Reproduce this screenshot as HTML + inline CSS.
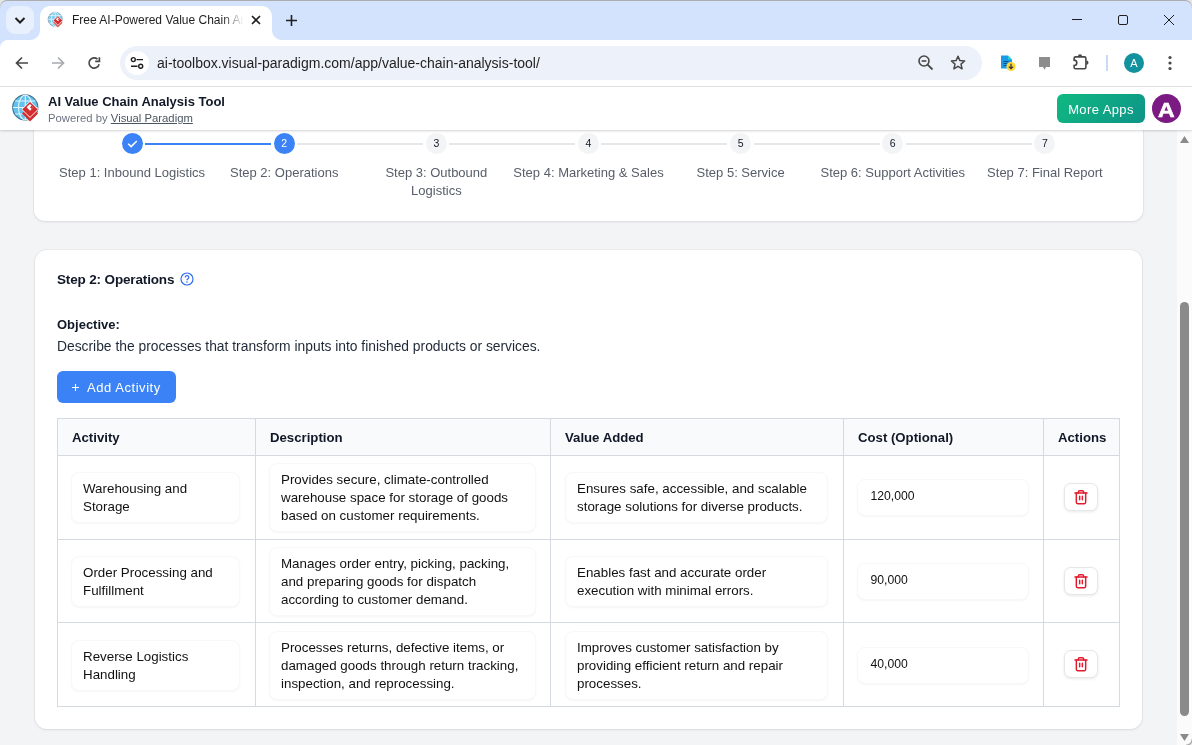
<!DOCTYPE html>
<html><head><meta charset="utf-8">
<style>
*{box-sizing:border-box;margin:0;padding:0}
html,body{width:1192px;height:745px;overflow:hidden;background:#fff}
#root{position:absolute;left:0;top:0;width:1192px;height:745px;background:#fff;will-change:transform;overflow:hidden}
body{position:relative;font-family:"Liberation Sans",sans-serif;color:#111827}
.abs{position:absolute}
.bold{font-weight:bold}
#winbg{left:0;top:0;width:1192px;height:12px;background:#e6e6e6}
#tabstrip{left:0;top:0;width:1192px;height:40px;background:#d3e3fd;border-radius:7px 7px 0 0;box-shadow:inset 0 1px 0 #adadad}
#topline{left:7px;top:0;width:1178px;height:1px;background:#adadad}
#ddbtn{left:6px;top:6px;width:28px;height:28px;border-radius:9px;background:#e9f0fd}
#tab{left:40px;top:6px;width:232px;height:35px;background:#fff;border-radius:10px 10px 0 0}
#toolbar{left:0;top:40px;width:1192px;height:46px;background:#fff}
#tbborder{left:0;top:86px;width:1192px;height:1px;background:#e2e3e6}
#omni{left:120px;top:46px;width:862px;height:34px;border-radius:17px;background:#edf1f9}
#url{left:157px;top:55px;font-size:14px;line-height:17px;color:#1f1f1f;white-space:nowrap}
#apphdr{left:0;top:87px;width:1192px;height:43px;background:#fff;box-shadow:0 1.5px 1.5px rgba(0,0,0,.08),0 1px 3px rgba(0,0,0,.08);z-index:5}
#content{left:0;top:130px;width:1177px;height:615px;background:#f3f4f6}
#scroll{left:1177px;top:130px;width:15px;height:615px;background:#fbfbfb}
.card{position:absolute;left:35px;width:1107px;background:#fff;border-radius:12px;box-shadow:0 1px 3px rgba(0,0,0,.08),0 0 0 1px rgba(0,0,0,.035)}
.stepc{position:absolute;top:133px;width:21px;height:21px;border-radius:50%;font-size:10.5px;line-height:21px;text-align:center}
.stepl{position:absolute;top:164px;width:152px;text-align:center;font-size:13px;line-height:18px;color:#575d69;white-space:nowrap}
.hl{height:1px;background:#d5d9e0}
.vl{width:1px;background:#d5d9e0}
.th{font-weight:bold;font-size:13.2px;line-height:16px;color:#111827;white-space:nowrap}
.box{position:absolute;border:1px solid #f8f8f9;border-radius:8px;background:#fff;box-shadow:0 1px 2px rgba(0,0,0,.04);padding:6.5px 11px 0;font-size:13.35px;line-height:18px;color:#111;white-space:nowrap}
.inp{padding:7px 12.5px;font-size:12.2px}
.delb{position:absolute;width:34px;height:28px;border:1px solid #e5e7eb;border-radius:7px;background:#fff;box-shadow:0 1px 3px rgba(0,0,0,.09);display:flex;align-items:center;justify-content:center}
</style></head><body>
<div id="root">
<div id="content" class="abs"></div>
<div class="card" style="top:80px;height:141px;left:34px;width:1109px;border-radius:11px"></div>
<div class="card" style="top:250px;height:479px"></div>
<div class="abs" style="left:145.07px;top:143px;width:126px;height:2px;background:#3b82f6"></div>
<div class="abs" style="left:297.21px;top:143px;width:126px;height:2px;background:#e5e7eb"></div>
<div class="abs" style="left:449.35px;top:143px;width:126px;height:2px;background:#e5e7eb"></div>
<div class="abs" style="left:601.49px;top:143px;width:126px;height:2px;background:#e5e7eb"></div>
<div class="abs" style="left:753.63px;top:143px;width:126px;height:2px;background:#e5e7eb"></div>
<div class="abs" style="left:905.77px;top:143px;width:126px;height:2px;background:#e5e7eb"></div>
<div class="stepc" style="left:121.57px;background:#3b82f6"><svg width="21" height="21" viewBox="0 0 22 22"><path d="M6.5 11.2L9.6 14.2L15.5 8.3" fill="none" stroke="#fff" stroke-width="1.6"/></svg></div>
<div class="stepl" style="left:56.07px">Step 1: Inbound Logistics</div>
<div class="stepc" style="left:273.71px;background:#3b82f6;color:#fff">2</div>
<div class="stepl" style="left:208.21px">Step 2: Operations</div>
<div class="stepc" style="left:425.85px;background:#f3f4f6;color:#111827">3</div>
<div class="stepl" style="left:360.35px">Step 3: Outbound<br>Logistics</div>
<div class="stepc" style="left:577.99px;background:#f3f4f6;color:#111827">4</div>
<div class="stepl" style="left:512.49px">Step 4: Marketing &amp; Sales</div>
<div class="stepc" style="left:730.13px;background:#f3f4f6;color:#111827">5</div>
<div class="stepl" style="left:664.63px">Step 5: Service</div>
<div class="stepc" style="left:882.27px;background:#f3f4f6;color:#111827">6</div>
<div class="stepl" style="left:816.77px">Step 6: Support Activities</div>
<div class="stepc" style="left:1034.41px;background:#f3f4f6;color:#111827">7</div>
<div class="stepl" style="left:968.91px">Step 7: Final Report</div>
<div class="abs bold" style="left:57px;top:271px;font-size:13.5px;letter-spacing:-0.15px;line-height:17px;color:#111827;white-space:nowrap">Step 2: Operations</div>
<svg class="abs" style="left:180px;top:272px" width="14" height="14" viewBox="0 0 14 14"><circle cx="7" cy="7" r="6" fill="none" stroke="#2f6fed" stroke-width="1.2"/><path d="M5.2 5.4A1.8 1.8 0 1 1 7.6 7.1C7.1 7.3 7 7.6 7 8.2" fill="none" stroke="#2f6fed" stroke-width="1.2"/><circle cx="7" cy="10" r="0.8" fill="#2f6fed"/></svg>
<div class="abs bold" style="left:57px;top:317px;font-size:13px;line-height:16px;color:#111827">Objective:</div>
<div class="abs" style="left:57px;top:338px;font-size:13.83px;line-height:16px;color:#1f2937;white-space:nowrap">Describe the processes that transform inputs into finished products or services.</div>
<div class="abs" style="left:57px;top:371px;width:119px;height:32px;border-radius:6px;background:#3b82f6;color:#fff"><svg class="abs" style="left:14px;top:12px" width="9" height="9" viewBox="0 0 9 9"><path d="M4.5 1V8M1 4.5H8" stroke="#fff" stroke-width="1.1"/></svg><span class="abs" style="left:30px;top:9px;font-size:13px;letter-spacing:0.55px;line-height:16px;white-space:nowrap">Add Activity</span></div>
<div class="abs" style="left:57px;top:418px;width:1063px;height:37px;background:#f9fafb"></div>
<div class="abs hl" style="left:57px;top:418px;width:1063px"></div>
<div class="abs hl" style="left:57px;top:455px;width:1063px"></div>
<div class="abs hl" style="left:57px;top:539px;width:1063px"></div>
<div class="abs hl" style="left:57px;top:622px;width:1063px"></div>
<div class="abs hl" style="left:57px;top:706px;width:1063px"></div>
<div class="abs vl" style="left:57px;top:418px;height:289px"></div>
<div class="abs vl" style="left:255px;top:418px;height:289px"></div>
<div class="abs vl" style="left:550px;top:418px;height:289px"></div>
<div class="abs vl" style="left:843px;top:418px;height:289px"></div>
<div class="abs vl" style="left:1043px;top:418px;height:289px"></div>
<div class="abs vl" style="left:1119px;top:418px;height:289px"></div>
<div class="abs th" style="left:72px;top:430px">Activity</div>
<div class="abs th" style="left:270px;top:430px">Description</div>
<div class="abs th" style="left:565px;top:430px">Value Added</div>
<div class="abs th" style="left:858px;top:430px">Cost (Optional)</div>
<div class="abs th" style="left:1058px;top:430px">Actions</div>
<div class="box" style="left:71px;top:472px;width:169px;height:51px">Warehousing and<br>Storage</div>
<div class="box" style="left:269px;top:463px;width:267px;height:69px">Provides secure, climate-controlled<br>warehouse space for storage of goods<br>based on customer requirements.</div>
<div class="box" style="left:565px;top:472px;width:263px;height:51px">Ensures safe, accessible, and scalable<br>storage solutions for diverse products.</div>
<div class="box inp" style="left:857px;top:479px;width:172px;height:37px">120,000</div>
<div class="delb" style="left:1064px;top:483px"><svg width="16" height="16" viewBox="0 0 24 24" fill="none" stroke="#e3192e" stroke-width="2.2" stroke-linecap="round" stroke-linejoin="round"><path d="M3 6h18"/><path d="M19 6v14c0 1-1 2-2 2H7c-1 0-2-1-2-2V6"/><path d="M8 6V4.5c0-1 1-2 2-2h4c1 0 2 1 2 2V6"/><path d="M10 11v5M14 11v5"/></svg></div>
<div class="box" style="left:71px;top:556px;width:169px;height:51px">Order Processing and<br>Fulfillment</div>
<div class="box" style="left:269px;top:547px;width:267px;height:69px">Manages order entry, picking, packing,<br>and preparing goods for dispatch<br>according to customer demand.</div>
<div class="box" style="left:565px;top:556px;width:263px;height:51px">Enables fast and accurate order<br>execution with minimal errors.</div>
<div class="box inp" style="left:857px;top:563px;width:172px;height:37px">90,000</div>
<div class="delb" style="left:1064px;top:567px"><svg width="16" height="16" viewBox="0 0 24 24" fill="none" stroke="#e3192e" stroke-width="2.2" stroke-linecap="round" stroke-linejoin="round"><path d="M3 6h18"/><path d="M19 6v14c0 1-1 2-2 2H7c-1 0-2-1-2-2V6"/><path d="M8 6V4.5c0-1 1-2 2-2h4c1 0 2 1 2 2V6"/><path d="M10 11v5M14 11v5"/></svg></div>
<div class="box" style="left:71px;top:640px;width:169px;height:51px">Reverse Logistics<br>Handling</div>
<div class="box" style="left:269px;top:631px;width:267px;height:69px">Processes returns, defective items, or<br>damaged goods through return tracking,<br>inspection, and reprocessing.</div>
<div class="box" style="left:565px;top:631px;width:263px;height:69px">Improves customer satisfaction by<br>providing efficient return and repair<br>processes.</div>
<div class="box inp" style="left:857px;top:647px;width:172px;height:37px">40,000</div>
<div class="delb" style="left:1064px;top:650px"><svg width="16" height="16" viewBox="0 0 24 24" fill="none" stroke="#e3192e" stroke-width="2.2" stroke-linecap="round" stroke-linejoin="round"><path d="M3 6h18"/><path d="M19 6v14c0 1-1 2-2 2H7c-1 0-2-1-2-2V6"/><path d="M8 6V4.5c0-1 1-2 2-2h4c1 0 2 1 2 2V6"/><path d="M10 11v5M14 11v5"/></svg></div>
<div id="scroll" class="abs"></div>
<svg class="abs" style="left:1177px;top:131px" width="15" height="15" viewBox="0 0 15 15"><path d="M3 12H12L7.5 5Z" fill="#8a8a8a"/></svg>
<div class="abs" style="left:1180px;top:302px;width:9px;height:414px;border-radius:5px;background:#8a8a8a"></div>
<svg class="abs" style="left:1177px;top:730px" width="15" height="15" viewBox="0 0 15 15"><path d="M3 4H12L7.5 11Z" fill="#8a8a8a"/></svg>
<div class="abs" style="left:1186px;top:739px;width:6px;height:6px;background:radial-gradient(circle at 0 0,rgba(0,0,0,0) 5px,rgba(80,80,80,.55) 6.2px,rgba(230,230,230,.6) 7.5px);z-index:20"></div>
<div id="apphdr" class="abs"></div>
<svg class="abs" style="left:11px;top:93px;z-index:6" width="28" height="29" viewBox="0 0 28 29">
  <circle cx="14.3" cy="14.5" r="12.6" fill="#62c2ee" stroke="#42748b" stroke-width="1.1"/>
  <path d="M2 14.5H26.5M4.2 8H24.4M4.2 21H24.4M14.3 2V27" stroke="#e3f5fd" stroke-width="1.1" fill="none"/>
  <ellipse cx="14.3" cy="14.5" rx="6.8" ry="12.5" fill="none" stroke="#e3f5fd" stroke-width="1.1"/>
  <path d="M19 12.6L27 20.6L19 28.6L11 20.6Z" fill="#d42d2d"/>
  <path d="M19 8.4L27.2 16.4L19 24.4L10.8 16.4Z" fill="#d42d2d" stroke="#fff" stroke-width="0.9"/>
  <path d="M19 10.9L22.4 14.3L19 17.7L15.6 14.3Z" fill="#fff"/>
  <path d="M20.7 12.6L22.4 14.3L20.7 16L19 14.3Z" fill="#d42d2d"/>
</svg>
<div class="abs bold" style="left:48px;top:94px;font-size:13px;line-height:16px;color:#111827;z-index:6;white-space:nowrap">AI Value Chain Analysis Tool</div>
<div class="abs" style="left:48px;top:111px;font-size:11.3px;line-height:14px;color:#6b7280;z-index:6;white-space:nowrap">Powered by <span style="text-decoration:underline;color:#4b5563">Visual Paradigm</span></div>
<div class="abs" style="left:1057px;top:94px;width:88px;height:29px;border-radius:6px;background:linear-gradient(135deg,#10b981,#0d9488);color:#fff;font-size:13px;letter-spacing:0.4px;line-height:31px;text-align:center;z-index:6">More Apps</div>
<div class="abs bold" style="left:1152px;top:94px;width:29px;height:29px;border-radius:50%;background:#7b1a82;color:#fff;font-size:20.5px;line-height:31px;text-align:center;z-index:6"><span style="display:inline-block;transform:scaleX(1.12);-webkit-text-stroke:0.6px #fff">A</span></div>
<!-- CHROME -->
<div id="winbg" class="abs"></div>
<div id="tabstrip" class="abs"></div>
<div id="topline" class="abs"></div>
<div id="ddbtn" class="abs"><svg width="28" height="28" viewBox="0 0 28 28"><path d="M9.5 12 L14 16.5 L18.5 12" fill="none" stroke="#1f1f1f" stroke-width="2"/></svg></div>
<div id="tab" class="abs"></div>
<div class="abs" style="left:30px;top:30px;width:10px;height:10px;background:radial-gradient(circle at 0 0,#d3e3fd 9.5px,#fff 10.5px)"></div>
<div class="abs" style="left:272px;top:30px;width:10px;height:10px;background:radial-gradient(circle at 10px 0,#d3e3fd 9.5px,#fff 10.5px)"></div>
<svg class="abs" style="left:47.2px;top:10.9px" width="16.1" height="16.7" viewBox="0 0 28 29">
  <circle cx="14.3" cy="14.5" r="12.4" fill="#7dcdf0" stroke="#7fa3b3" stroke-width="1.3"/>
  <path d="M2 14.5H26.5M4.2 8H24.4M4.2 21H24.4M14.3 2V27" stroke="#e3f5fd" stroke-width="1.4" fill="none"/>
  <ellipse cx="14.3" cy="14.5" rx="6.8" ry="12.5" fill="none" stroke="#e3f5fd" stroke-width="1.4"/>
  <path d="M19 12.6L27 20.6L19 28.6L11 20.6Z" fill="#e06060"/>
  <path d="M19 8.4L27.2 16.4L19 24.4L10.8 16.4Z" fill="#d42d2d" stroke="#fff" stroke-width="1"/>
  <path d="M19 10.9L22.4 14.3L19 17.7L15.6 14.3Z" fill="#fff"/>
  <path d="M20.7 12.6L22.4 14.3L20.7 16L19 14.3Z" fill="#d42d2d"/>
</svg>
<div class="abs" style="left:72px;top:12px;font-size:12px;color:#1f1f1f;white-space:nowrap;width:172px;overflow:hidden;line-height:16px;-webkit-mask-image:linear-gradient(90deg,#000 150px,transparent 172px)">Free AI-Powered Value Chain Analysis Tool</div>
<svg class="abs" style="left:250px;top:14px" width="12" height="12" viewBox="0 0 12 12"><path d="M2 2L10 10M10 2L2 10" stroke="#1f1f1f" stroke-width="1.6"/></svg>
<svg class="abs" style="left:285px;top:14px" width="13" height="13" viewBox="0 0 13 13"><path d="M6.5 1V12M1 6.5H12" stroke="#1f1f1f" stroke-width="1.6"/></svg>
<!-- window controls -->
<div class="abs" style="left:1072px;top:19px;width:10px;height:1px;background:#1f1f1f"></div>
<div class="abs" style="left:1118px;top:15px;width:10px;height:10px;border:1px solid #1f1f1f;border-radius:2px"></div>
<svg class="abs" style="left:1163px;top:14px" width="12" height="12" viewBox="0 0 12 12"><path d="M1 1L11 11M11 1L1 11" stroke="#1f1f1f" stroke-width="1"/></svg>
<div id="toolbar" class="abs"></div>
<div class="abs" style="left:0;top:40px;width:8px;height:8px;background:radial-gradient(circle at 8px 8px,#fff 7.5px,#d3e3fd 8.5px)"></div>
<div id="tbborder" class="abs"></div>
<!-- nav -->
<svg class="abs" style="left:14px;top:55px" width="16" height="16" viewBox="0 0 16 16"><path d="M14 8H3M8 2.5L2.5 8L8 13.5" fill="none" stroke="#474747" stroke-width="1.7"/></svg>
<svg class="abs" style="left:50px;top:55px" width="16" height="16" viewBox="0 0 16 16"><path d="M2 8H13M8 2.5L13.5 8L8 13.5" fill="none" stroke="#a8abae" stroke-width="1.7"/></svg>
<svg class="abs" style="left:86px;top:55px" width="16" height="16" viewBox="0 0 16 16"><path d="M13.1 9.2A5.1 5.1 0 1 1 11.5 4.1" fill="none" stroke="#474747" stroke-width="1.6"/><path d="M13.4 2.2V6.3H9.2" fill="none" stroke="#474747" stroke-width="1.7"/></svg>
<div id="omni" class="abs"></div>
<div class="abs" style="left:125px;top:51px;width:24px;height:24px;border-radius:12px;background:#fff"></div>
<svg class="abs" style="left:130px;top:56px" width="14" height="14" viewBox="0 0 14 14"><circle cx="3.3" cy="3.6" r="2" fill="none" stroke="#1f1f1f" stroke-width="1.4"/><path d="M6.5 3.6H13M1 10.3H7.5" stroke="#1f1f1f" stroke-width="1.4"/><circle cx="10.7" cy="10.3" r="2" fill="none" stroke="#1f1f1f" stroke-width="1.4"/></svg>
<div id="url" class="abs">ai-toolbox.visual-paradigm.com/app/value-chain-analysis-tool/</div>
<svg class="abs" style="left:917px;top:54px" width="18" height="18" viewBox="0 0 18 18"><circle cx="7" cy="7" r="5" fill="none" stroke="#474747" stroke-width="1.6"/><path d="M4.6 7H9.4" stroke="#474747" stroke-width="1.6"/><path d="M10.6 10.6L15.5 15.5" stroke="#474747" stroke-width="1.8"/></svg>
<svg class="abs" style="left:949px;top:54px" width="18" height="18" viewBox="0 0 18 18"><path d="M9 2.2L10.9 6.6L15.6 7L12 10.1L13.1 14.8L9 12.3L4.9 14.8L6 10.1L2.4 7L7.1 6.6Z" fill="none" stroke="#474747" stroke-width="1.5" stroke-linejoin="round"/></svg>
<svg class="abs" style="left:998px;top:53px" width="20" height="20" viewBox="0 0 20 20"><path d="M3 2.5H10L14 6.5V15.5H3Z" fill="#1a9be8"/><path d="M10 2.5L14 6.5H10Z" fill="#2bd2d2"/><path d="M5.5 8.5H10.5M5.5 10.5H10.5M5.5 12.5H9" stroke="#0b4f86" stroke-width="1"/><circle cx="13" cy="13.5" r="4.6" fill="#fdd835"/><path d="M13 10.8V15.6M10.9 13.6L13 15.7L15.1 13.6" fill="none" stroke="#334" stroke-width="1.3"/></svg>
<svg class="abs" style="left:1036px;top:54px" width="17" height="18" viewBox="0 0 17 18"><path d="M3 3H14V13H10L8.5 15.8L7 13H3Z" fill="#8d8d8d"/></svg>
<svg class="abs" style="left:1068px;top:50px" width="26" height="24" viewBox="0 0 26 24"><path d="M7.6 6.9H16.4Q17.9 6.9 17.9 8.4V17.2Q17.9 18.7 16.4 18.7H7.6Q6.1 18.7 6.1 17.2V15.5A2.7 2.7 0 0 0 6.1 10.1V8.4Q6.1 6.9 7.6 6.9Z" fill="none" stroke="#474747" stroke-width="1.6"/><path d="M9.9 6.4A2.1 2.1 0 0 1 14.1 6.4Z" fill="#474747"/><path d="M18.4 10.6A2.1 2.1 0 0 1 18.4 14.8Z" fill="#474747"/></svg>
<div class="abs" style="left:1106px;top:55px;width:2px;height:16px;background:#c9daf6"></div>
<div class="abs" style="left:1124px;top:53px;width:20px;height:20px;border-radius:10px;background:#12919e;color:#fff;font-size:11px;line-height:20px;text-align:center">A</div>
<svg class="abs" style="left:1166px;top:54px" width="8" height="18" viewBox="0 0 8 18"><circle cx="4" cy="3.5" r="1.6" fill="#474747"/><circle cx="4" cy="9" r="1.6" fill="#474747"/><circle cx="4" cy="14.5" r="1.6" fill="#474747"/></svg>
</div>
</body></html>
